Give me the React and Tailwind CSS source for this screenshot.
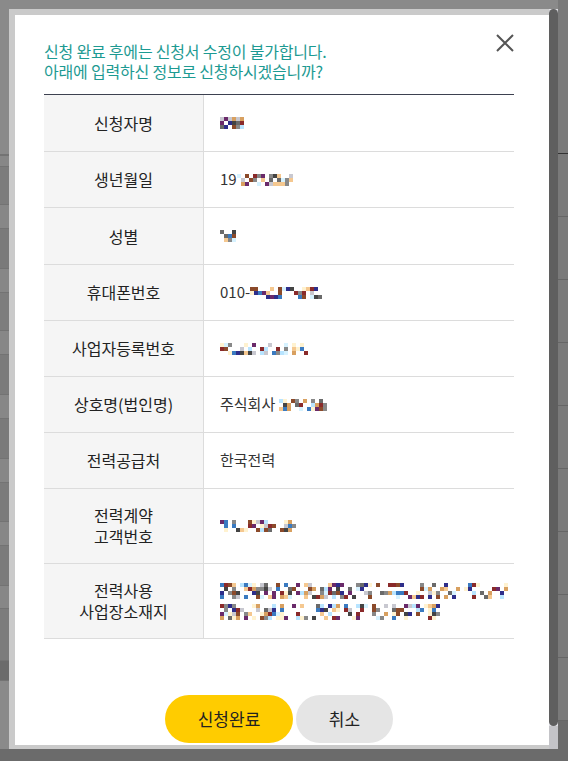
import React from 'react'

const PALETTE = [
    '#b8e4ff', '#d6f2ff', '#444444', '#888888', '#6a6a6a', '#d8a060', '#f5c890',
    '#8b4a2a', '#8a2a2a', '#6a2a6a', '#2e2e8a', '#3a7ac0', '#fff2d0', '#c8c8d0',
]

// deterministic pixel noise standing in for the blurred personal data
const Mosaic = ({ cols, rows = 3, seed = 1, blank = 0.45 }) => {
    let s = seed * 9301 + 49297
    const rnd = () => {
        s = (s * 9301 + 49297) % 233280
        return s / 233280
    }
    const grid = []
    for (let r = 0; r < rows; r++) {
        const line = []
        for (let c = 0; c < cols; c++) {
            line.push(rnd() < blank ? 'transparent' : PALETTE[Math.floor(rnd() * PALETTE.length)])
        }
        grid.push(line)
    }
    return (
        <span className="inline-flex flex-col align-middle">
            {grid.map((line, i) => (
                <span key={i} className="flex">
                    {line.map((bg, j) => (
                        <span key={j} className="w-[4px] h-[4px]" style={{ backgroundColor: bg }} />
                    ))}
                </span>
            ))}
        </span>
    )
}

const rows = [
    { h: 57, label: '신청자명', value: <Mosaic cols={6} rows={3} seed={3} blank={0.2} /> },
    { h: 56, label: '생년월일', value: <><span>19</span><Mosaic cols={14} rows={3} seed={7} blank={0.3} /></> },
    { h: 57, label: '성별', value: <Mosaic cols={4} rows={3} seed={11} blank={0.4} /> },
    { h: 56, label: '휴대폰번호', value: <><span>010-</span><Mosaic cols={18} rows={3} seed={5} blank={0.4} /></> },
    { h: 56, label: '사업자등록번호', value: <Mosaic cols={22} rows={3} seed={13} blank={0.45} /> },
    { h: 56, label: '상호명(법인명)', value: <><span className="mr-[4px]">주식회사</span><Mosaic cols={12} rows={3} seed={17} blank={0.35} /></> },
    { h: 56, label: '전력공급처', value: <span>한국전력</span> },
    { h: 75, label: <>전력계약<br />고객번호</>, value: <Mosaic cols={19} rows={3} seed={19} blank={0.35} /> },
    {
        h: 75,
        label: <>전력사용<br />사업장소재지</>,
        value: (
            <div className="flex flex-col gap-[5px]">
                <Mosaic cols={72} rows={4} seed={23} blank={0.5} />
                <Mosaic cols={55} rows={4} seed={29} blank={0.5} />
            </div>
        ),
    },
]

const leftStrip = [
    [155, '#8a8a8a'], [1, '#454545'], [11, '#878787'], [38, '#7c7c7c'], [24, '#878787'],
    [40, '#7a7a7a'], [24, '#878787'], [38, '#7d7d7d'], [24, '#878787'], [40, '#7b7b7b'],
    [24, '#878787'], [40, '#7a7a7a'], [24, '#878787'], [39, '#7b7b7b'], [24, '#878787'],
    [40, '#7b7b7b'], [23, '#878787'], [52, '#7c7c7c'], [20, '#6b6b6b'],
]

const App = () => {
    return (
        <div className="relative w-[568px] h-[761px] overflow-hidden bg-[#8a8a8a] font-['Noto_Sans_CJK_KR','Noto_Sans',sans-serif]">
            {/* dimmed page underneath */}
            <div className="flex w-full h-full">
                <div className="w-[9px] flex flex-col">
                    {leftStrip.map(([h, c], i) => (
                        <div key={i} className="w-full border-b border-[#737373]" style={{ height: h, backgroundColor: c }} />
                    ))}
                </div>
                <div className="flex-1" />
                <div className="w-[10px] flex flex-col bg-[#7a7a7a]">
                    <div className="h-[154px] border-b border-[#333]" />
                    {Array.from({ length: 9 }).map((_, i) => (
                        <div key={i} className="h-[63px] border-b border-[#666]" />
                    ))}
                    <div className="flex-1 bg-[#6b6b6b]" />
                </div>
            </div>
            <div className="absolute left-0 right-0 bottom-0 h-[12px] bg-[#6b6b6b]" />

            {/* modal */}
            <div className="absolute left-[9px] top-[9px] w-[549px] h-[740px] flex">
                <div className="flex-1 border-l-[6px] border-t-[6px] border-b-[4px] border-[#cacaca] bg-white relative overflow-hidden">
                    <button className="absolute top-[19px] right-[35px] w-[18px] h-[18px] text-[#555]">
                        <svg viewBox="0 0 18 18" width="18" height="18" fill="none" stroke="currentColor" strokeWidth="2">
                            <path d="M1 1 L17 17 M17 1 L1 17" />
                        </svg>
                    </button>
                    <div className="pl-[29px] pr-[35px] pt-[26px]">
                        <p className="text-[16px] leading-[20px] text-[#1d9a92] tracking-[-0.2px]">
                            신청 완료 후에는 신청서 수정이 불가합니다.<br />
                            아래에 입력하신 정보로 신청하시겠습니까?
                        </p>
                        <div className="mt-[13px] border-t border-[#3d4150]">
                            {rows.map((row, i) => (
                                <div key={i} className="flex border-b border-[#dcdcdc]" style={{ height: row.h }}>
                                    <div className="w-[160px] shrink-0 bg-[#f5f5f5] border-r border-[#dcdcdc] flex items-center justify-center text-center text-[16px] leading-[21px] text-[#222]">
                                        {row.label}
                                    </div>
                                    <div className="flex-1 flex items-center pl-[16px] text-[15px] text-[#333]">
                                        {row.value}
                                    </div>
                                </div>
                            ))}
                        </div>
                        <div className="mt-[56px] flex justify-center gap-[3px]">
                            <button className="w-[128px] h-[48px] rounded-full bg-[#ffcc00] text-[17px] text-[#222]">신청완료</button>
                            <button className="w-[97px] h-[48px] rounded-full bg-[#e5e5e5] text-[17px] text-[#222]">취소</button>
                        </div>
                    </div>
                </div>
                <div className="w-[9px] flex flex-col bg-[#dedee3]">
                    <div className="h-[717px] rounded-full bg-[#5f5f5f]" />
                    <div className="flex-1 bg-[#c4c4c8]" />
                </div>
            </div>
        </div>
    )
}

export default App
